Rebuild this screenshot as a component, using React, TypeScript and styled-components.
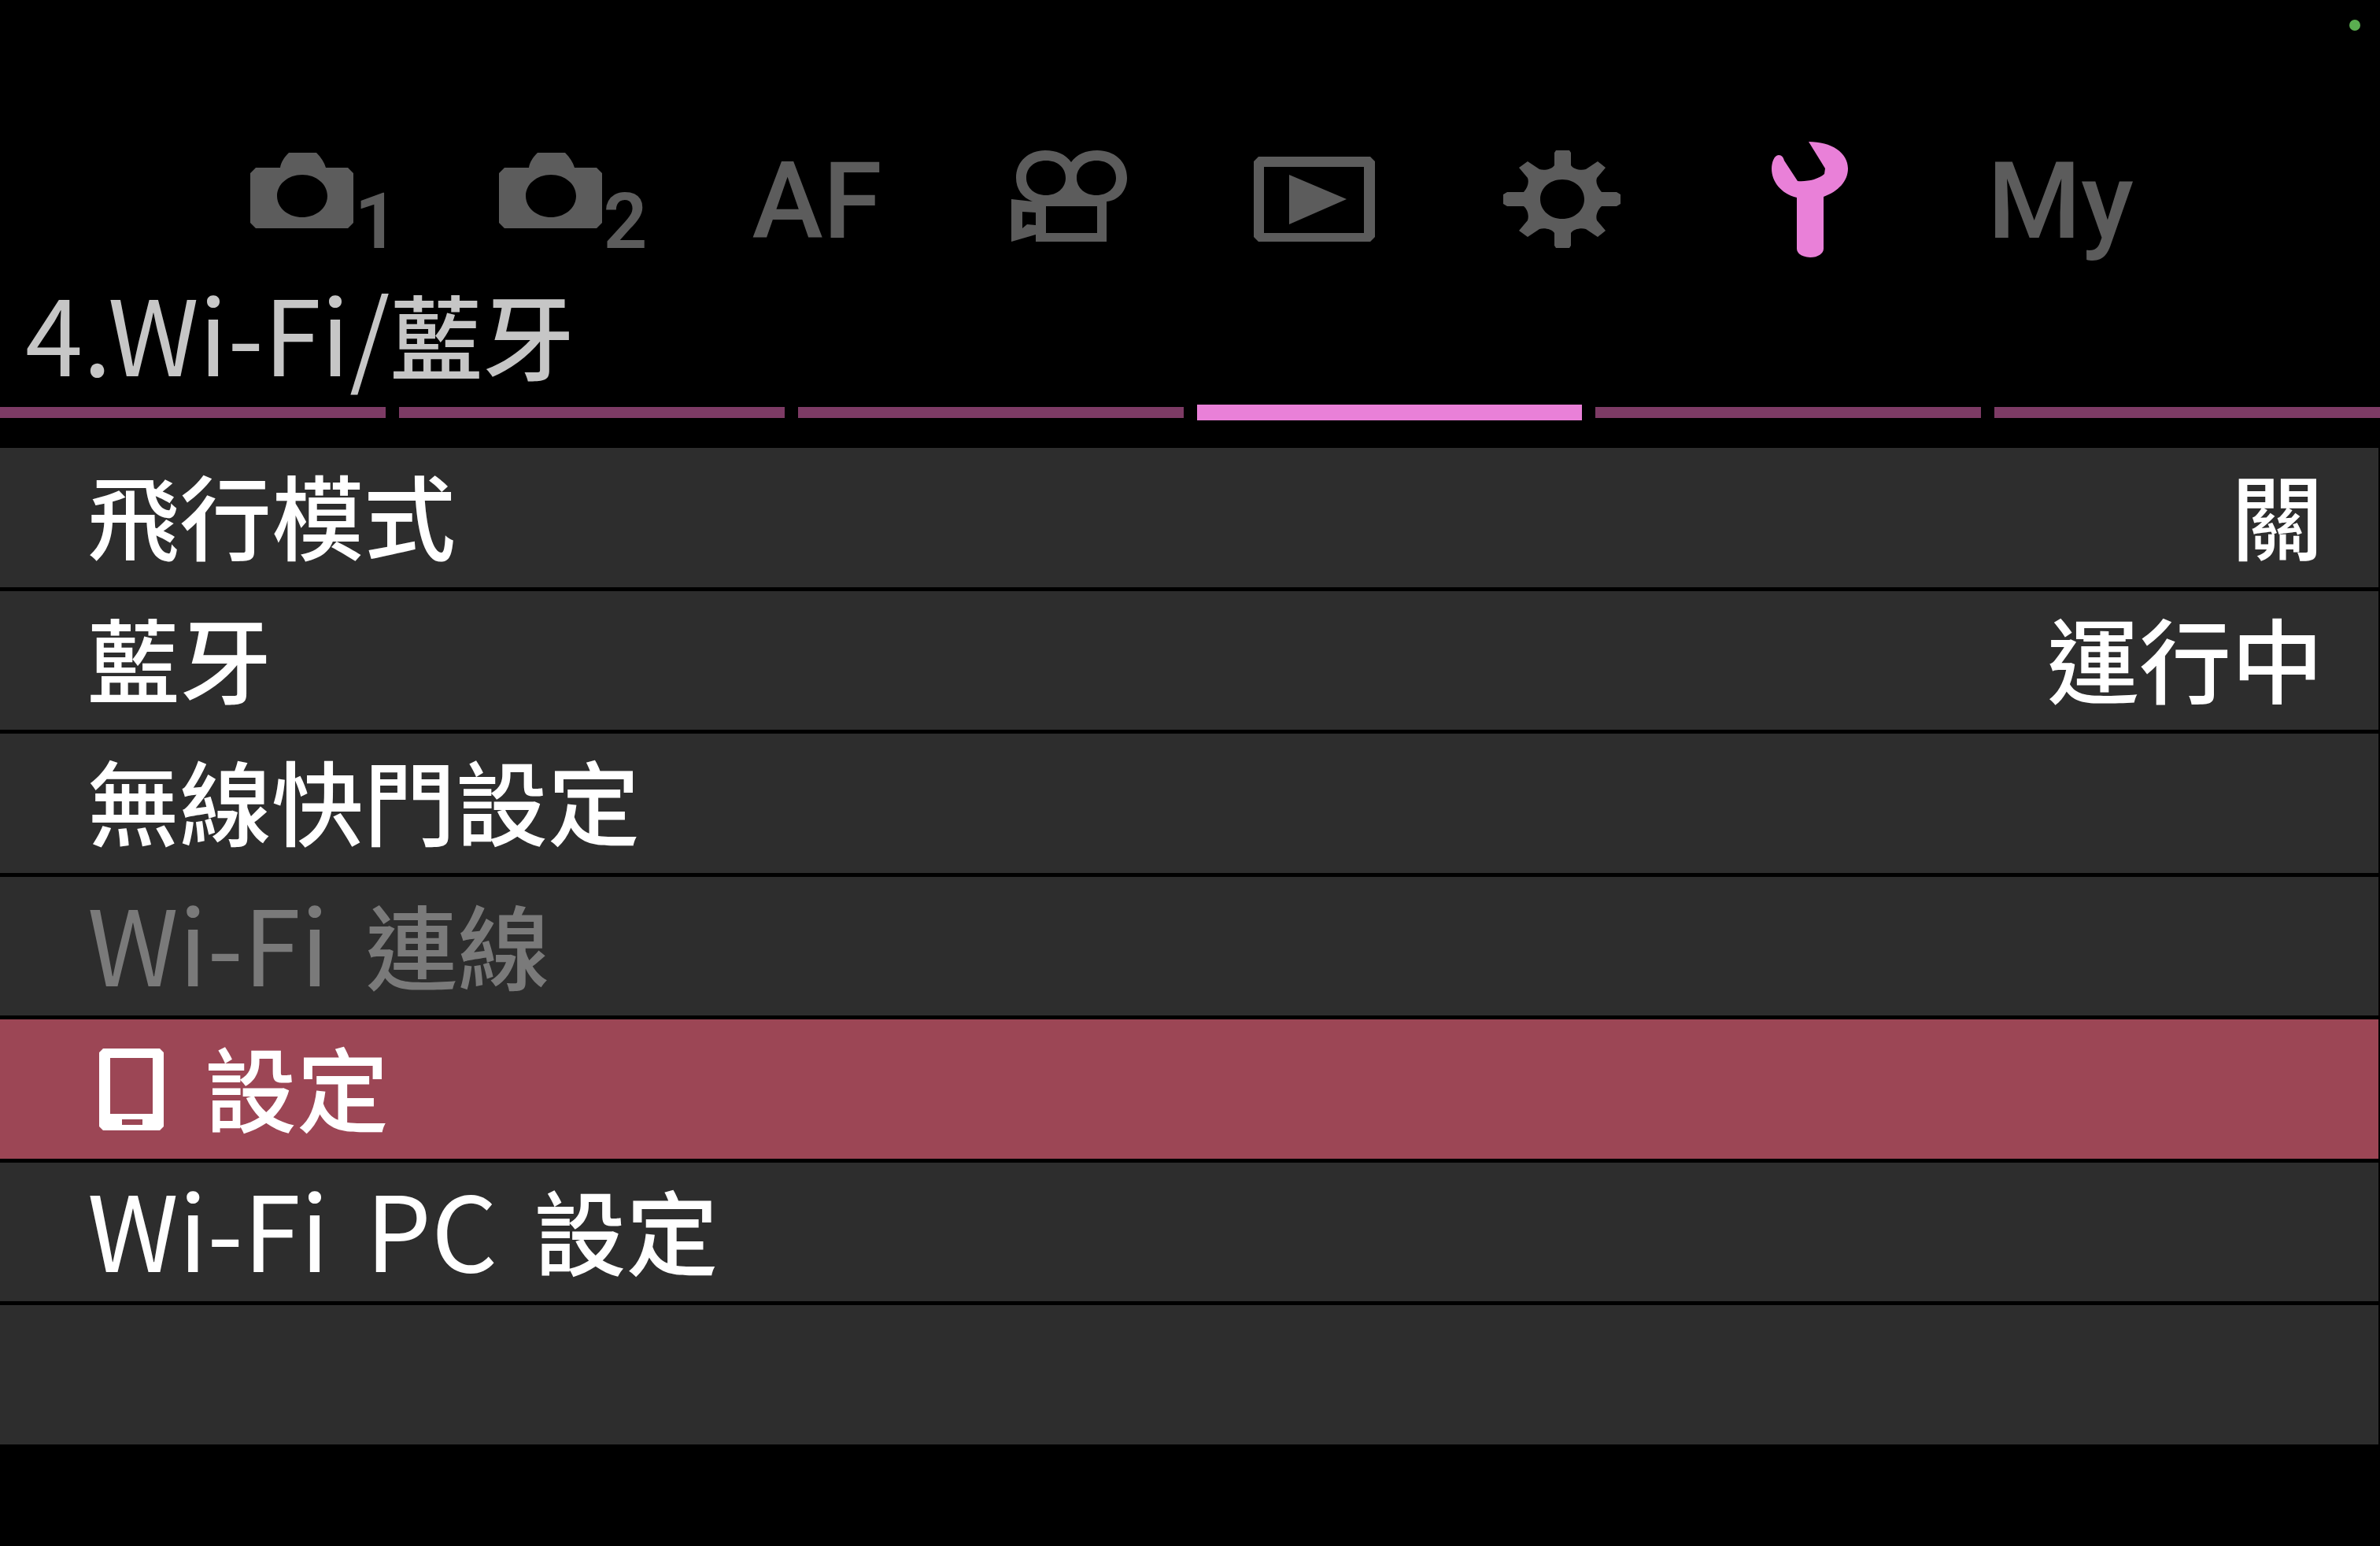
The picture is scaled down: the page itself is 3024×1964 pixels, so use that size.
import React from "react";
import styled, { createGlobalStyle } from "styled-components";

const color = {
  background: "#000000",
  row: "#2d2d2d",
  rowSelected: "#9c4655",
  accent: "#e980d8",
  accentDim: "#7d3b65",
  icon: "#5c5c5c",
  title: "#c6c6c6",
  text: "#ffffff",
  disabled: "#7a7a7a",
  recording: "#5aae50",
};

const cjk = `"Noto Sans CJK TC", "Noto Sans", sans-serif`;
const latin = `Roboto, "Liberation Sans", sans-serif`;

const GlobalStyle = createGlobalStyle`
  *, *::before, *::after { box-sizing: border-box; }
  html { background: ${color.background}; }
  body { margin: 0; font-family: ${cjk}; }
  button { appearance: none; border: 0; margin: 0; padding: 0; background: none; color: inherit; font: inherit; }
`;

const Screen = styled.main`
  display: flex;
  flex-direction: column;
  min-height: 100vh;
  padding-bottom: 129px;
  background: ${color.background};
`;

const StatusBar = styled.div`
  display: flex;
  justify-content: flex-end;
  height: 176px;
  padding: 25px;
`;

const StatusDot = styled.span`
  width: 14px;
  height: 14px;
  border-radius: 50%;
  background: ${color.recording};
`;

const TabBar = styled.nav`
  display: grid;
  grid-template-columns: repeat(8, minmax(0, 1fr));
  padding: 0 248px;
`;

const Tab = styled.button<{ $active?: boolean }>`
  display: flex;
  align-items: flex-end;
  justify-content: center;
  height: 160px;
  color: ${(p) => (p.$active ? color.accent : color.icon)};
`;

const TabIcon = styled.svg<{ $width?: number }>`
  display: block;
  flex: none;
  width: ${(p) => p.$width ?? 160}px;
  height: 160px;
  fill: currentColor;
`;

const TabText = styled.span`
  font: 500 136px/160px ${latin};
`;

const TabDigit = styled.span`
  width: 57px;
  font: 600 98px/108px ${latin};
  text-align: right;
`;

const Title = styled.h1`
  height: 178px;
  margin: 0;
  padding: 5px 0 0 32px;
  color: ${color.title};
  font-size: 117px;
  font-weight: 500;
  line-height: 160px;
  white-space: nowrap;
`;

const Pager = styled.div`
  display: grid;
  grid-template-columns: repeat(6, minmax(0, 1fr));
  align-items: center;
  gap: 17px;
  height: 20px;
  margin-bottom: 35px;
`;

const PageMark = styled.button<{ $active: boolean }>`
  height: ${(p) => (p.$active ? 20 : 14)}px;
  background: ${(p) => (p.$active ? color.accent : color.accentDim)};
`;

const Menu = styled.ul`
  display: grid;
  flex: 1;
  grid-auto-rows: minmax(0, 1fr);
  gap: 5px;
  margin: 0;
  padding: 0 2px 0 0;
  list-style: none;
`;

const MenuItem = styled.li<{ $selected?: boolean }>`
  display: flex;
  min-height: 120px;
  background: ${(p) => (p.$selected ? color.rowSelected : color.row)};
`;

const MenuButton = styled.button`
  display: flex;
  flex: 1;
  align-items: center;
  justify-content: space-between;
  padding: 0 70px 10px 111px;
  color: ${color.text};
  font-size: 117px;
  font-weight: 500;
  line-height: 160px;
  white-space: nowrap;

  &:disabled {
    color: ${color.disabled};
  }
`;

const Label = styled.span`
  display: flex;
  align-items: center;
`;

const Latin = styled.span<{ $spaced?: boolean }>`
  margin-right: ${(p) => (p.$spaced ? 20 : 0)}px;
  font-size: 132px;
  font-weight: 400;
  line-height: 160px;
  vertical-align: -4px;
`;

const PhoneIcon = styled.svg`
  width: 82px;
  height: 104px;
  margin: 10px 52px 0 15px;
  fill: currentColor;
`;

const Camera = () => (
  <TabIcon $width={144} viewBox="0 0 144 160" aria-hidden="true">
    <path
      fillRule="evenodd"
      d="M19 37H50C51 30 55 24 61 18H96C102 24 106 30 108 37H136L143 44V107L136 114H19L12 107V44ZM78 46C60 46 46 58 46 73S60 100 78 100S110 88 110 73S96 46 78 46Z"
    />
  </TabIcon>
);

const MovieCamera = () => (
  <TabIcon viewBox="0 0 160 160" aria-hidden="true">
    <path
      fillRule="evenodd"
      d="M11 77L38 80C25 75 17 64 17 50C17 29 33 15 54 15C68 15 80 20 87 30C94 20 106 15 120 15C142 15 158 29 158 50C158 66 147 79 132 80V131H42V122L11 131ZM55 28C40 28 30 37 30 50S41 72 55 72S80 63 80 50S70 28 55 28ZM119 28C105 28 94 37 94 50S105 72 119 72S144 63 144 50S134 28 119 28ZM55 86V120H120V86ZM25 93V114L31 109L42 110V94Z"
    />
  </TabIcon>
);

const Playback = () => (
  <TabIcon viewBox="0 0 160 160" aria-hidden="true">
    <path
      fillRule="evenodd"
      d="M9 23H151L157 29V125L151 131H9L3 125V29ZM16 36V120H143V36ZM48 46L121 77L48 109Z"
    />
  </TabIcon>
);

const Gear = () => (
  <TabIcon viewBox="0 0 160 160" aria-hidden="true">
    <path
      fillRule="evenodd"
      d="M71 15H88L90 18V34C93 39 103 41 109 39L124 29L134 37L123 50C121 56 124 62 129 68H148L153 71V83L148 86H129C124 90 121 98 123 104L134 117L124 125L109 115C103 113 93 115 90 120V136L88 139H71L69 136V120C66 115 56 113 50 115L35 125L24 117L35 104C37 98 35 90 30 86H9L4 83V71L9 68H30C35 62 37 56 35 50L24 37L35 29L50 39C56 41 66 39 69 34V18ZM79 52C63 52 51 63 51 77S63 102 79 102S107 91 107 77S95 52 79 52Z"
    />
  </TabIcon>
);

const Wrench = () => (
  <TabIcon viewBox="0 0 160 160" aria-hidden="true">
    <path d="M76 4C105 4 126 18 126 38C126 54 114 67 95 74V140C95 146 88 151 78 151S61 146 61 140V75C41 70 29 55 29 38C29 31 32 21 38 21C42 21 44 24 45 28L62 54C74 55 88 52 96 45L97 38Z" />
  </TabIcon>
);

const Phone = () => (
  <PhoneIcon viewBox="0 0 82 104" aria-hidden="true">
    <path
      fillRule="evenodd"
      d="M5 0H77L82 5V99L77 104H5L0 99V5ZM14 12V83H68V12ZM29 90V97H55V90Z"
    />
  </PhoneIcon>
);

const tabs: { name: string; content: React.ReactNode; active?: boolean }[] = [
  { name: "Shooting 1", content: <><Camera /><TabDigit>1</TabDigit></> },
  { name: "Shooting 2", content: <><Camera /><TabDigit>2</TabDigit></> },
  { name: "AF", content: <TabText>AF</TabText> },
  { name: "Movie", content: <MovieCamera /> },
  { name: "Playback", content: <Playback /> },
  { name: "Custom", content: <Gear /> },
  { name: "Setup", content: <Wrench />, active: true },
  { name: "My", content: <TabText>My</TabText> },
];

const pages = [1, 2, 3, 4, 5, 6];
const currentPage = 4;

interface Item {
  id: string;
  label?: React.ReactNode;
  value?: string;
  disabled?: boolean;
  selected?: boolean;
}

const items: Item[] = [
  { id: "airplane", label: "飛行模式", value: "關" },
  { id: "bluetooth", label: "藍牙", value: "運行中" },
  { id: "shutter", label: "無線快門設定" },
  {
    id: "wifi",
    label: <span><Latin $spaced>Wi-Fi</Latin> 連線</span>,
    disabled: true,
  },
  { id: "phone", label: <><Phone />設定</>, selected: true },
  {
    id: "wifi-pc",
    label: (
      <span>
        <Latin $spaced>Wi-Fi</Latin> <Latin $spaced>PC</Latin> 設定
      </span>
    ),
  },
  { id: "empty" },
];

export default function App() {
  return (
    <>
      <GlobalStyle />
      <Screen lang="zh-Hant">
        <StatusBar>
          <StatusDot />
        </StatusBar>
        <TabBar>
          {tabs.map((tab) => (
            <Tab key={tab.name} type="button" aria-label={tab.name} $active={tab.active}>
              {tab.content}
            </Tab>
          ))}
        </TabBar>
        <Title>
          <Latin>4.Wi-Fi/</Latin>藍牙
        </Title>
        <Pager>
          {pages.map((page) => (
            <PageMark
              key={page}
              type="button"
              aria-label={String(page)}
              $active={page === currentPage}
            />
          ))}
        </Pager>
        <Menu>
          {items.map((item) => (
            <MenuItem key={item.id} $selected={item.selected}>
              {item.label && (
                <MenuButton type="button" disabled={item.disabled}>
                  <Label>{item.label}</Label>
                  {item.value && <span>{item.value}</span>}
                </MenuButton>
              )}
            </MenuItem>
          ))}
        </Menu>
      </Screen>
    </>
  );
}
